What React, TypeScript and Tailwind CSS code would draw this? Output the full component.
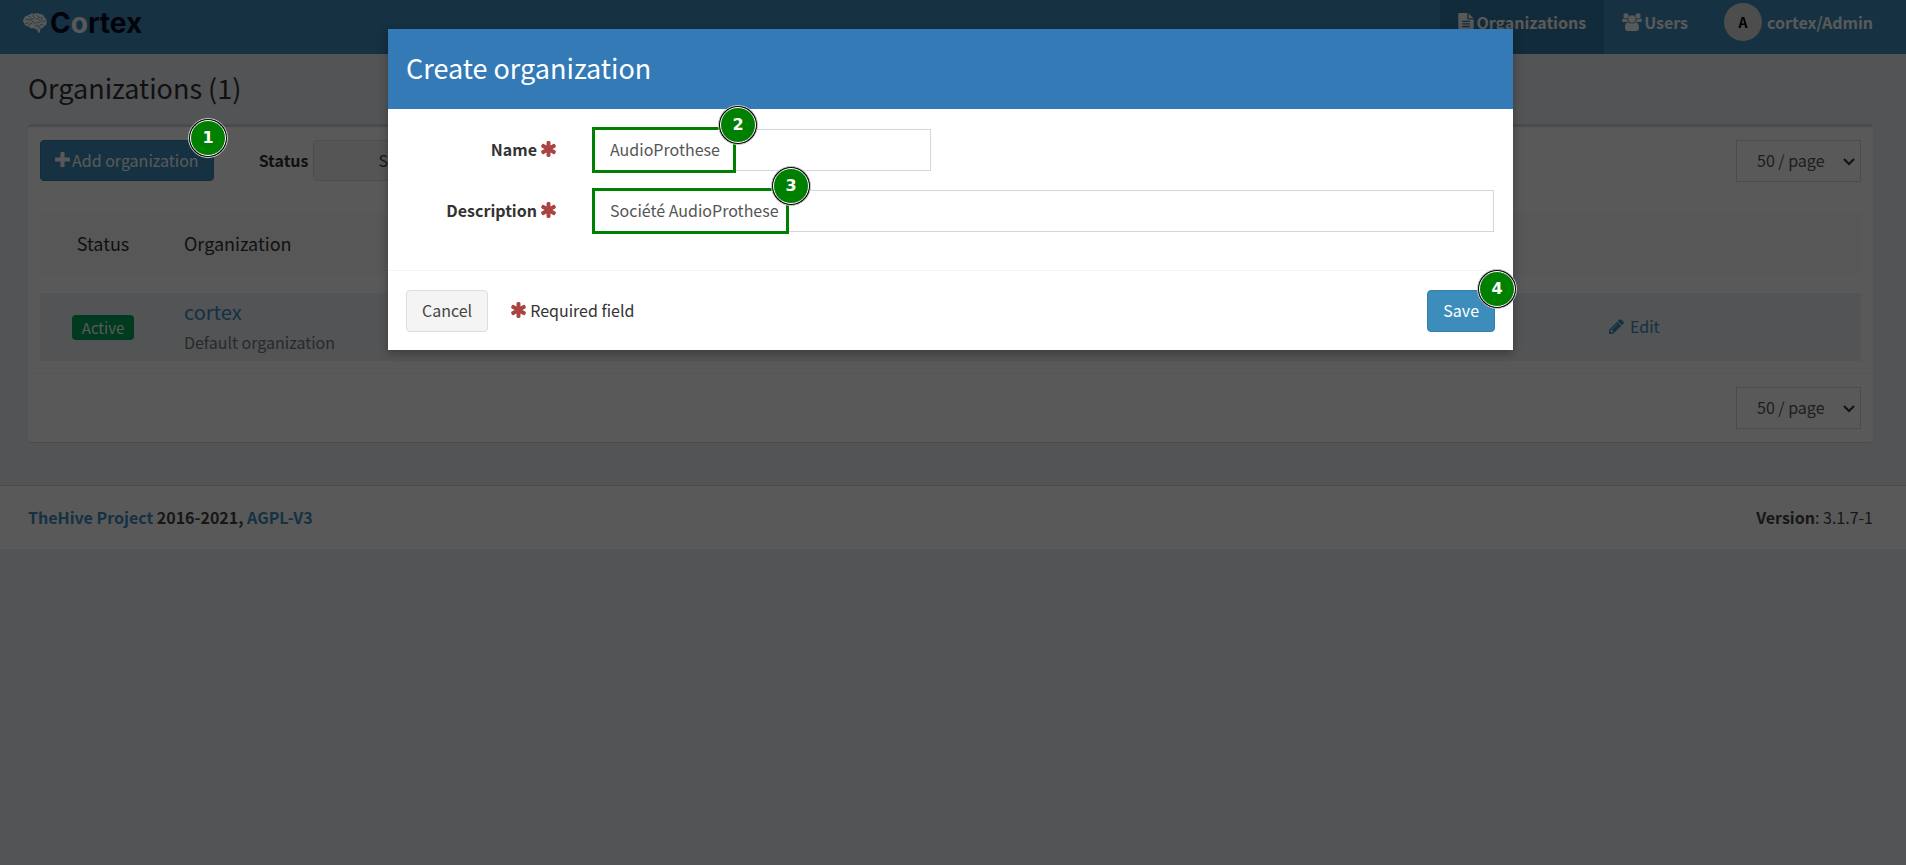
import React from 'react';

const ICONS = {
  asterisk:
    'M1546 1050q46 26 59.500 77.500t-12.500 97.500l-64 110q-26 46-77.500 59.500t-97.500-12.500l-266-153v307q0 52-38 90t-90 38h-128q-52 0-90-38t-38-90v-307l-266 153q-46 26-97.500 12.500t-77.500-59.500l-64-110q-26-46-12.500-97.500t59.500-77.500l266-154-266-154q-46-26-59.500-77.500t12.500-97.500l64-110q26-46 77.500-59.500t97.500 12.500l266 153v-307q0-52 38-90t90-38h128q52 0 90 38t38 90v307l266-153q46-26 97.500-12.500t77.500 59.500l64 110q26 46 12.500 97.500t-59.500 77.500l-266 154z',
  plus:
    'M1600 736v192q0 40-28 68t-68 28h-416v416q0 40-28 68t-68 28h-192q-40 0-68-28t-28-68v-416h-416q-40 0-68-28t-28-68v-192q0-40 28-68t68-28h416v-416q0-40 28-68t68-28h192q40 0 68 28t28 68v416h416q40 0 68 28t28 68z',
  pencil:
    'M491 1536l91-91-235-235-91 91v107h128v128h107zm523-928q0-22-22-22-10 0-17 7l-542 542q-7 7-7 17 0 22 22 22 10 0 17-7l542-542q7-7 7-17zm-54-192l416 416-832 832h-416v-416zm683 96q0 53-37 90l-166 166-416-416 166-165q36-38 90-38 53 0 91 38l235 234q37 39 37 91z',
  file:
    'M1596 476q14 14 28 36h-472v-472q22 14 36 28zm-476 164h544v1056q0 40-28 68t-68 28h-1344q-40 0-68-28t-28-68v-1600q0-40 28-68t68-28h800v544q0 40 28 68t68 28zm160 736v-64q0-14-9-23t-23-9h-704q-14 0-23 9t-9 23v64q0 14 9 23t23 9h704q14 0 23-9t9-23zm0-256v-64q0-14-9-23t-23-9h-704q-14 0-23 9t-9 23v64q0 14 9 23t23 9h704q14 0 23-9t9-23zm0-256v-64q0-14-9-23t-23-9h-704q-14 0-23 9t-9 23v64q0 14 9 23t23 9h704q14 0 23-9t9-23z',
};

function Icon({ name, box, className }: { name: keyof typeof ICONS; box: string; className: string }) {
  return (
    <svg viewBox={box} className={className} fill="currentColor" aria-hidden="true">
      <path d={ICONS[name]} />
    </svg>
  );
}

function BrainIcon() {
  return (
    <svg viewBox="0 0 24 20" className="h-5 w-6" aria-hidden="true">
      <path
        fill="#fff"
        d="M5 2.5C7 .8 9 .3 11 .8c2-.9 4.500-.8 6 .3 2.500 0 4 1.500 4.300 3.200C23.300 5.500 24 7.500 23.500 9.300c.3 2-.7 3.500-2.500 4-.7 1.500-2 2.200-3.500 2.200l-.7 4-1.800.2-.6-3c-1.500 0-2.500-.7-3-1.700-2.400.8-4.800.3-5.900-1.500C3 13.200 1.300 12 1 10-.3 8.500-.2 6.500 1.200 5.300 1.500 3.800 3 2.600 5 2.500Z"
      />
      <g fill="none" stroke="#3c8dbc" strokeWidth="0.8" strokeLinecap="round">
        <path d="M3 6.500c1.500-.5 2.500-.3 3.500.8M6 3.500c1.500.2 2 1 2 2.500M10.500 1.500c-.8 1.500-.3 2.500.8 3.200M11 5c-.8 1.500-2 2-3.500 2M14 2.500c1 1 1.500 1.800 3 1.800M13.500 5.500c1.500-.2 2.500.4 3 1.800M19 4.500c.2 1.300-.3 2.200-1.200 3M22 8c-1.300-.5-2.500 0-3 1.200M2.500 10.500c1.500.3 2.500-.3 3-1.500M6 12.500c.5-1.500 1.500-2.200 3-2M9.500 8.500c1.500.3 2.500 1 2.800 2.500M12.500 13.500c1-.8 2-1 3.300-.6M13.500 9c1.200.8 2.500.8 3.700 0M20 12c-1-.8-2.200-.8-3 0M15.500 15.500c0-1 .6-1.600 1.500-1.700" />
      </g>
    </svg>
  );
}

function UsersIcon() {
  return (
    <svg viewBox="0 0 20 18" className="h-[18px] w-5" fill="currentColor" aria-hidden="true">
      <circle cx="4" cy="2.800" r="2.600" />
      <circle cx="16" cy="2.800" r="2.600" />
      <circle cx="10" cy="6" r="3.800" />
      <path d="M1.800 5.500C2.600 6.300 4.500 6.400 5.300 5.900 5.200 7.300 5.600 8.300 6.300 9H2C.7 9 .1 8.400.1 7.400.1 6.400.6 5.200 1.800 5.500ZM18.200 5.500c-.8.8-2.700.9-3.500.4.1 1.400-.3 2.400-1 3.100H18c1.300 0 1.900-.6 1.900-1.600 0-1-.5-2.200-1.700-1.900Z" />
      <path d="M6.300 9.200c2 1.700 5.400 1.700 7.400 0 2.400.2 3.300 2.800 3.300 5.900 0 1.800-1.200 2.900-2.800 2.900H5.800C4.200 18 3 16.900 3 15.100c0-3.100.9-5.700 3.300-5.900Z" />
    </svg>
  );
}

function PageSizeSelect({ id }: { id: string }) {
  return (
    <div className="relative w-[125px]">
      <select
        id={id}
        aria-label="Page size"
        className="h-[42px] w-full appearance-none border border-[#d2d6de] bg-white pb-0.5 pl-5 pr-8 text-[16px] leading-6 text-[#555]"
      >
        <option>50 / page</option>
      </select>
      <svg viewBox="0 0 12 8" className="pointer-events-none absolute right-1.5 top-[18px] h-2 w-3" aria-hidden="true">
        <path d="M1 1l5 5 5-5" fill="none" stroke="#333" strokeWidth="2" />
      </svg>
    </div>
  );
}

function Step({ n, className }: { n: number; className: string }) {
  return (
    <span
      className={
        'absolute flex size-10 items-center justify-center rounded-full border border-[#ccc] bg-black p-px ' + className
      }
    >
      <span className="flex size-full items-center justify-center rounded-full border border-white bg-[#008000] font-['DejaVu_Sans',sans-serif] text-[16px] font-bold leading-5 text-white">
        {n}
      </span>
    </span>
  );
}

function Required() {
  return <Icon name="asterisk" box="170 128 1452 1536" className="h-4 w-[15px] text-[#a94442]" />;
}

function Header() {
  return (
    <header className="flex h-[54px] items-stretch justify-between bg-[#3c8dbc] pl-[23px] pr-[33px] text-white">
      <a href="#home" className="flex items-center gap-[3px] pb-2">
        <BrainIcon />
        <span className="font-['Inter',sans-serif] text-[28px] font-bold leading-7 text-[#0b0b26]">
          C<span className="text-white">o</span>rtex
        </span>
      </a>
      <nav className="flex text-[16px] font-bold leading-6">
        <a href="#organizations" className="flex items-center gap-0.5 bg-[#357ca5] px-[18px] pb-[11px]">
          <Icon name="file" box="128 0 1536 1792" className="h-[18px] w-4" />
          Organizations
        </a>
        <a href="#users" className="flex items-center gap-0.5 px-[18px] pb-[11px]">
          <UsersIcon />
          Users
        </a>
        <a href="#account" className="flex items-center gap-[5px] pb-[10px] pl-[18px]">
          <span className="flex size-[38px] items-center justify-center rounded-full bg-[#ddd] text-[14px] text-black">A</span>
          cortex/Admin
        </a>
      </nav>
    </header>
  );
}

function OrganizationList() {
  return (
    <main className="pb-[43px] pl-7 pr-[33px] pt-3.5">
      <h1 className="text-[27px] leading-10 text-[#333]">Organizations (1)</h1>
      <section className="mt-4 rounded border-t-[3px] border-[#d2d6de] bg-white shadow-[0_1px_1px_rgba(0,0,0,0.1)]">
        <div className="flex items-start justify-between px-3 pt-[13px]">
          <div className="flex items-center">
            <button className="flex h-[41px] items-center gap-0.5 rounded border border-[#367fa9] bg-[#3c8dbc] px-[14px] pb-0.5 text-[16px] leading-6 text-white">
              <Icon name="plus" box="192 128 1408 1408" className="size-[15px]" />
              Add organization
            </button>
            <span className="ml-[45px] pb-0.5 text-[16px] font-bold leading-6 text-[#333]">Status</span>
            <button className="ml-[5px] h-[41px] w-[190px] rounded border border-[#ddd] bg-[#f4f4f4] pb-0.5 pl-16 text-left text-[16px] leading-6 text-[#444]">
              Show all
            </button>
          </div>
          <PageSizeSelect id="size-top" />
        </div>
        <div className="px-3 pt-[31px]">
          <table className="w-full table-fixed text-left text-[#333]">
            <thead>
              <tr className="h-[61px] bg-[#f9f9f9] text-[18px] leading-6">
                <th className="w-[126px] pb-0.5 text-center font-normal">Status</th>
                <th className="pb-0.5 pl-[18px] font-normal">Organization</th>
                <th className="w-[269px]" />
              </tr>
            </thead>
            <tbody>
              <tr className="h-[19px]">
                <td colSpan={3} />
              </tr>
              <tr className="h-[68px] bg-[#ecf0f5] text-[16px] leading-6">
                <td className="text-center">
                  <span className="inline-block rounded bg-[#00a65a] px-2.5 text-[15px] leading-[25px] text-white">Active</span>
                </td>
                <td className="pb-0.5 pl-[18px]">
                  <a href="#cortex" className="block text-[20px] leading-8 text-[#3c8dbc]">cortex</a>
                  <p className="leading-7 text-[#777]">Default organization</p>
                </td>
                <td className="pb-0.5">
                  <a href="#edit" className="ml-[17px] flex items-center gap-1.5 text-[#3c8dbc]">
                    <Icon name="pencil" box="128 128 1536 1536" className="size-[15px]" />
                    Edit
                  </a>
                </td>
              </tr>
            </tbody>
          </table>
        </div>
        <div className="mt-3 flex justify-end border-t border-[#f4f4f4] px-3 py-[13px]">
          <PageSizeSelect id="size-bottom" />
        </div>
      </section>
    </main>
  );
}

function Footer() {
  return (
    <footer className="flex justify-between border-t border-[#d2d6de] bg-white pb-5 pl-7 pr-[33px] pt-[19px] text-[16px] leading-6 text-[#444]">
      <strong>
        <a href="#thehive" className="text-[#3c8dbc]">TheHive Project</a> 2016-2021,{' '}
        <a href="#license" className="text-[#3c8dbc]">AGPL-V3</a>
      </strong>
      <span>
        <b>Version</b>: 3.1.7-1
      </span>
    </footer>
  );
}

function CreateDialog() {
  const label = 'flex h-[42px] w-[149px] shrink-0 items-center justify-end gap-1 pb-0.5 text-[16px] font-bold leading-6 text-[#333]';
  const input = 'h-[42px] w-full border border-[#d2d6de] bg-white px-4 pb-0.5 text-[16px] leading-6 text-[#555]';
  return (
    <form role="dialog" aria-labelledby="dialog-title" className="w-[1125px] max-w-full bg-white shadow-[0_3px_9px_rgba(0,0,0,0.3)]">
      <div className="flex h-20 items-center bg-[#337ab7] px-[18px] pb-0.5">
        <h2 id="dialog-title" className="text-[27px] leading-10 text-white">Create organization</h2>
      </div>
      <div className="flex flex-col gap-[19px] px-[19px] pb-[38px] pt-5">
        <div className="flex gap-[37px] pr-[563px]">
          <label htmlFor="org-name" className={label}>
            Name <Required />
          </label>
          <div className="relative flex-1">
            <input id="org-name" defaultValue="AudioProthese" className={input} />
            <span className="pointer-events-none absolute -left-px -top-0.5 h-[46px] w-36 border-[3px] border-[#008000]">
              <Step n={2} className="-right-[25px] -top-[25px]" />
            </span>
          </div>
        </div>
        <div className="flex gap-[37px]">
          <label htmlFor="org-description" className={label}>
            Description <Required />
          </label>
          <div className="relative flex-1">
            <input id="org-description" defaultValue="Société AudioProthese" className={input} />
            <span className="pointer-events-none absolute -left-px -top-0.5 h-[46px] w-[197px] border-[3px] border-[#008000]">
              <Step n={3} className="-right-[25px] -top-[25px]" />
            </span>
          </div>
        </div>
      </div>
      <div className="flex items-center border-t border-[#f4f4f4] px-[18px] pb-[18px] pt-[19px] text-[16px] leading-6">
        <button type="button" className="h-[42px] rounded border border-[#ddd] bg-[#f4f4f4] px-[15px] pb-0.5 text-[#444]">
          Cancel
        </button>
        <span className="ml-[23px] flex items-center gap-1 pb-0.5 text-[#333]">
          <Required /> Required field
        </span>
        <div className="relative ml-auto">
          <button type="submit" className="h-[42px] rounded border border-[#367fa9] bg-[#3c8dbc] px-[15px] pb-0.5 text-white">
            Save
          </button>
          <Step n={4} className="-right-[22px] -top-[21px]" />
        </div>
      </div>
    </form>
  );
}

export default function App() {
  return (
    <div className="relative min-h-screen bg-[#ecf0f5] font-['Noto_Sans_CJK_SC',sans-serif]">
      <Header />
      <OrganizationList />
      <Footer />
      <div className="absolute inset-0 flex items-start justify-center bg-black/65 pr-[5px] pt-[29px]">
        <CreateDialog />
      </div>
      <Step n={1} className="left-[188px] top-[118px]" />
    </div>
  );
}
